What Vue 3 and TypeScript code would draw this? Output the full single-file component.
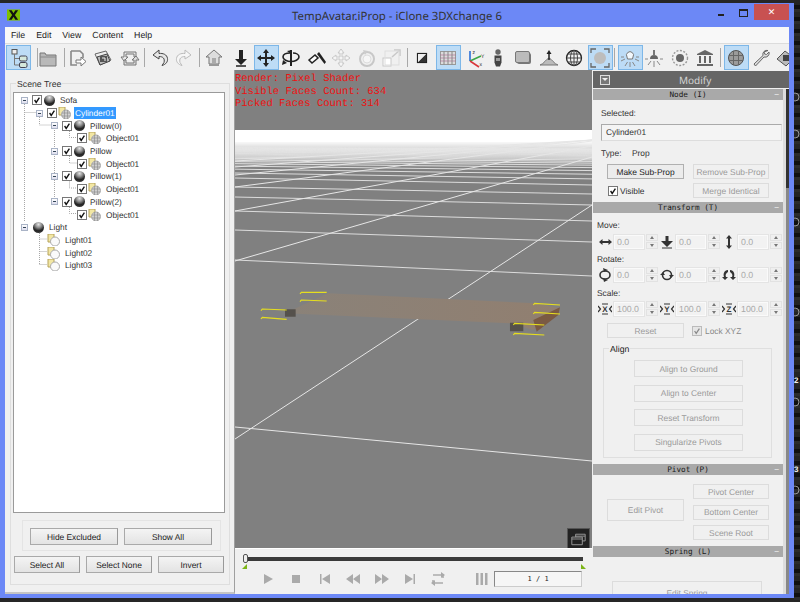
<script setup lang="ts">
interface Tool { c: number; svg?: string; on?: boolean; sep?: boolean; ml?: number }

const I = {
  tree: '<rect x="3" y="1.5" width="5" height="4.5" fill="#eee" stroke="#555"/><path d="M5.5 6v11h5M5.5 10.5h5" stroke="#777" fill="none"/><rect x="10.5" y="8" width="7.5" height="5" rx="1.5" fill="#d5e8dc" stroke="#445"/><rect x="10.5" y="14.5" width="7.5" height="5" rx="1.5" fill="#d5e8dc" stroke="#445"/>',
  folder: '<path d="M2 5h5l1 2h10v11H2z" fill="#b9b9b9" stroke="#777"/><path d="M2 9h16" stroke="#8a8a8a"/>',
  page: '<path d="M4 3h9l3 3v4M4 3v14h6" fill="none" stroke="#888" stroke-width="1.6"/><path d="M9 12h5V9l5 4.5-5 4.5v-3H9z" fill="#fff" stroke="#777"/>',
  layers: '<path d="M2 6l11-3 5 9-11 5z" fill="#eee" stroke="#666"/><path d="M4 9l10-3 3 7-10 4z" fill="#bbb" stroke="#444"/><rect x="7" y="8" width="7" height="6" fill="#555"/><path d="M9 10h3v3" stroke="#eee" fill="none"/>',
  swap: '<path d="M4 4h12v5h-2V6H6v3l2 0-4 4-3-4h3z" fill="#e8e8e8" stroke="#777"/><path d="M16 17H4v-5h2v3h8v-3h-2l4-4 3 4h-3z" fill="#ddd" stroke="#777"/>',
  undo: '<path d="M9 2L3 7l6 4V8.500c4 0 6 2 5 6l-2 3c4-1 6-4 5.500-7C17 6.500 13 5 9 5.500z" fill="#e6e6e6" stroke="#444"/>',
  redo: '<path d="M11 2l6 5-6 4V8.500c-4 0-6 2-5 6l2 3c-4-1-6-4-5.500-7C3 6.500 7 5 11 5.500z" fill="#f6f6f6" stroke="#bbb"/>',
  home: '<path d="M10 2l8 7h-3v7H5V9H2z" fill="#ddd" stroke="#777"/><path d="M5 16h10v2H5z" fill="#999"/><path d="M8 10h4v6H8z" fill="#aaa"/>',
  down: '<path d="M8 2h4v9h4l-6 6-6-6h4z" fill="#222"/><path d="M5 18h10" stroke="#222" stroke-width="1.500"/>',
  move: '<path d="M10 1l3 4h-2v4h4V7l4 3-4 3v-2h-4v4h2l-3 4-3-4h2v-4H5v2l-4-3 4-3v2h4V5H7z" fill="#222"/>',
  rotate: '<path d="M9 2h2v16H9z" fill="#222"/><path d="M9 5C5 5 2 6.500 2 9s4 4.500 8 4.500 8-2 8-4.500-3-4-6-4" fill="none" stroke="#222" stroke-width="1.600"/><path d="M2 12l-1 5 5-2z" fill="#222"/><path d="M6 3l5-1-1 4z" fill="#222"/>',
  pick: '<path d="M2 12l6-5 3 3-6 5z" fill="#fff" stroke="#222" stroke-width="1.500"/><path d="M10 6l2-2 7 10-1.500 2z" fill="#222"/>',
  fmove: '<path d="M10 1l3 4h-2v4h4V7l4 3-4 3v-2h-4v4h2l-3 4-3-4h2v-4H5v2l-4-3 4-3v2h4V5H7z" fill="#f5f5f5" stroke="#c8c8c8"/>',
  frot: '<circle cx="10" cy="11" r="7" fill="none" stroke="#c8c8c8" stroke-width="2"/><circle cx="10" cy="11" r="4" fill="#f6f6f6" stroke="#ddd"/><path d="M6 2l5 1-3 4z" fill="#ccc"/>',
  fscale: '<rect x="1" y="10" width="8" height="8" fill="#fff" stroke="#c8c8c8"/><path d="M10 9l8-7M12 2h6v6" fill="none" stroke="#c8c8c8" stroke-width="1.500"/><rect x="3" y="3" width="14" height="14" fill="none" stroke="#ddd"/>',
  contrast: '<rect x="5.500" y="5.500" width="9" height="9" fill="#fff" stroke="#222" stroke-width="1.200"/><path d="M6 14L14 6v8z" fill="#333"/><path d="M6 6h8L6 14z" fill="#eee"/>',
  grid: '<rect x="2.500" y="3.500" width="15" height="13" fill="#dcdcdc" stroke="#999"/><path d="M2.500 7h15M2.500 10h15M2.500 13h15" stroke="#a58" stroke-opacity=".55"/><path d="M6 3.500v13M10 3.500v13M14 3.500v13" stroke="#888"/>',
  axis: '<path d="M5 13V3" stroke="#2a6fd6" stroke-width="1.600"/><path d="M5 13l11-5" stroke="#3aa648" stroke-width="1.600"/><path d="M5 13l9 6" stroke="#d9373a" stroke-width="1.600"/><text x="7.500" y="5.500" class="ax">z</text><text x="16" y="9.500" class="ax">Y</text><text x="14.500" y="17.500" class="ax">x</text>',
  person: '<circle cx="10" cy="4" r="2.700" fill="#666"/><path d="M6.500 7.500h7v7l-1.500 4H8l-1.500-4z" fill="#444"/><path d="M8 10h4v3H8z" fill="#999"/>',
  rect: '<rect x="4" y="5" width="14" height="11" rx="2" fill="#777"/><rect x="2.500" y="3.500" width="14" height="11" rx="1.500" fill="#bbb" stroke="#777"/>',
  mound: '<path d="M1 17c4-1 6-6 9-7 3 1 5 6 9 7z" fill="#bbb" stroke="#777"/><path d="M10 12V4" stroke="#222" stroke-width="1.500"/><path d="M7.500 6L10 2l2.500 4z" fill="#222"/>',
  globe: '<circle cx="10" cy="10" r="7.500" fill="#f4f4f4" stroke="#222" stroke-width="1.300"/><ellipse cx="10" cy="10" rx="3.500" ry="7.500" fill="none" stroke="#444"/><path d="M2.500 10h15M3.500 6h13M3.500 14h13M10 2.500v15" stroke="#444" fill="none"/>',
  focus: '<circle cx="10" cy="10" r="6" fill="#bdbdbd"/><path d="M1 5V1h5M14 1h5v4M19 15v4h-5M6 19H1v-4" fill="none" stroke="#666" stroke-width="1.300"/>',
  bulb: '<path d="M7 9a3.500 3.500 0 1 1 6 0l-.5 2h-5z" fill="#f2f8fd" stroke="#777"/><path d="M1 13l4-2M19 13l-4-2M5 18l2.500-4M15 18l-2.500-4M10 19v-5M1 9h3M16 9h3" stroke="#888" fill="none"/>',
  bulb2: '<path d="M6 11a4 4 0 0 1 8 0z" fill="#666"/><path d="M9 2h2v6H9z" fill="#777"/><path d="M1 11h3M16 11h3M4 17l3-4M16 17l-3-4M10 19v-6" stroke="#888" fill="none"/>',
  sun: '<circle cx="10" cy="10" r="4" fill="#666"/><g stroke="#999" stroke-width="1.400" stroke-dasharray="2 1.500" fill="none"><circle cx="10" cy="10" r="7.500"/></g>',
  museum: '<path d="M10 2l8 4v1H2V6z" fill="#666"/><path d="M4 8h2v7H4zM9 8h2v7H9zM14 8h2v7h-2z" fill="#666"/><path d="M2 16h16v2H2z" fill="#666"/>',
  ball: '<circle cx="10" cy="10" r="7.500" fill="#9b9b9b" stroke="#555"/><path d="M3 7.500h14M3 12.500h14M7.500 3v14M12.500 3v14" stroke="#666"/>',
  wrench: '<path d="M17 2.500a4 4 0 0 0-5 5L3 16l1.500 2 8.500-9a4 4 0 0 0 5-5l-2.500 2.500-2-.5-.5-2z" fill="#ddd" stroke="#666"/>',
  film: '<path d="M1 11l8-8 9 7-8 8z" fill="#bbb" stroke="#555"/><rect x="7" y="7" width="6" height="6" fill="#444"/>',
}

const raw: Tool[] = [
  { c: 18.5, svg: I.tree, on: true }, { c: 37, sep: true }, { c: 48, svg: I.folder }, { c: 64, sep: true },
  { c: 77, svg: I.page }, { c: 103, svg: I.layers }, { c: 130, svg: I.swap }, { c: 144, sep: true },
  { c: 160, svg: I.undo }, { c: 184, svg: I.redo }, { c: 199, sep: true }, { c: 214, svg: I.home },
  { c: 241, svg: I.down }, { c: 266, svg: I.move, on: true }, { c: 291, svg: I.rotate }, { c: 317, svg: I.pick },
  { c: 341, svg: I.fmove }, { c: 367, svg: I.frot }, { c: 392, svg: I.fscale }, { c: 407, sep: true },
  { c: 422, svg: I.contrast }, { c: 448, svg: I.grid, on: true }, { c: 475, svg: I.axis }, { c: 498, svg: I.person },
  { c: 523, svg: I.rect }, { c: 549, svg: I.mound }, { c: 574, svg: I.globe }, { c: 600, svg: I.focus, on: true },
  { c: 614.5, sep: true }, { c: 630, svg: I.bulb, on: true }, { c: 654, svg: I.bulb2 }, { c: 680, svg: I.sun },
  { c: 705, svg: I.museum }, { c: 720.5, sep: true }, { c: 736, svg: I.ball, on: true }, { c: 761, svg: I.wrench },
  { c: 786, svg: I.film },
]
let right = 5
const tools = raw.map((t) => {
  const w = t.sep ? 1 : 25
  const ml = t.c - w / 2 - right
  right = t.c + w / 2
  return { ...t, ml }
})

const menu = ['File', 'Edit', 'View', 'Content', 'Help']

type Kind = 'sphere' | 'prop' | 'light'
interface Row { label: string; level: number; exp: boolean; check: boolean; kind: Kind; sel?: boolean }
const pillow = (label: string): Row[] => [
  { label, level: 2, exp: true, check: true, kind: 'sphere' },
  { label: 'Object01', level: 3, exp: false, check: true, kind: 'prop' },
]
const rows: Row[] = [
  { label: 'Sofa', level: 0, exp: true, check: true, kind: 'sphere' },
  { label: 'Cylinder01', level: 1, exp: true, check: true, kind: 'prop', sel: true },
  ...pillow('Pillow(0)'), ...pillow('Pillow'), ...pillow('Pillow(1)'), ...pillow('Pillow(2)'),
  { label: 'Light', level: 0, exp: true, check: false, kind: 'sphere' },
  { label: 'Light01', level: 4, exp: false, check: false, kind: 'light' },
  { label: 'Light02', level: 4, exp: false, check: false, kind: 'light' },
  { label: 'Light03', level: 4, exp: false, check: false, kind: 'light' },
]

const hArrow = '<path d="M1 7l3.500-3v2h6V4L14 7l-3.500 3V8h-6v2z" fill="#333"/>'
const dArrow = '<path d="M5.500 1h3v5H13l-6 6-6-6h4.500z" fill="#333"/><path d="M2 13h10" stroke="#333"/>'
const vArrow = '<path d="M7 0l3 3.500H8v7h2L7 14l-3-3.500h2v-7H4z" fill="#333"/>'
const rot1 = '<ellipse cx="7" cy="7" rx="5" ry="4" fill="none" stroke="#333" stroke-width="1.600"/><path d="M5 0l5 2-4 2zM5 10l5 2-4 2z" fill="#333"/>'
const rot2 = '<circle cx="7" cy="7" r="4.500" fill="none" stroke="#333" stroke-width="1.600"/><path d="M0 7l3-3 2 3zM14 7l-3 3-2-3z" fill="#333"/>'
const rot3 = '<path d="M6 2C2 2 1 6 2 9l-2 0 3 3 3-3-2 0c-1-2 0-4 2-5zM8 2c4 0 5 4 4 7l2 0-3 3-3-3 2 0c1-2 0-4-2-5z" fill="#333"/>'
const sc = (l: string) => `<path d="M0 4l2.500 3L0 10M14 4l-2.500 3 2.500 3" fill="none" stroke="#333" stroke-width="1.200"/><path d="M4 2h6M4 12h6" stroke="#333"/><text x="7" y="10" text-anchor="middle" class="sc">${l}</text>`

const spinRows = [
  { label: 'Move:', cls: 'r-move', cells: [{ svg: hArrow, v: '0.0' }, { svg: dArrow, v: '0.0' }, { svg: vArrow, v: '0.0' }] },
  { label: 'Rotate:', cls: 'r-rot', cells: [{ svg: rot1, v: '0.0' }, { svg: rot2, v: '0.0' }, { svg: rot3, v: '0.0' }] },
  { label: 'Scale:', cls: 'r-scale', cells: [{ svg: sc('X'), v: '100.0' }, { svg: sc('Y'), v: '100.0' }, { svg: sc('Z'), v: '100.0' }] },
]
const align = ['Align to Ground', 'Align to Center', 'Reset Transform', 'Singularize Pivots']

const L = [120, 90, 71, 57, 47, 38]
const R = [136, 102, 81, 65, 54, 45]
const hLines: { y1: number; y2: number; o: number }[] = []
for (let n = 0; n < 32; n++) {
  const dl = n < 6 ? L[n] : 1 / (0.0263 + 0.004 * (n - 5))
  const dr = n < 6 ? R[n] : 1 / (0.0222 + 0.0035 * (n - 5))
  hLines.push({ y1: 70 + dl, y2: 70 + dr, o: n < 14 ? 0.9 : 0.75 })
}
const diag = [
  [369, 135], [191, 87], [141, 76], [117, 71], [105, 70], [97, 70], [91, 70],
]
const brackets = [
  [195, 67, 275, 67], [195, 90, 275, 93], [78, 117, 155, 120], [78, 142, 155, 148],
  [895, 100, 975, 105], [895, 127, 975, 132], [835, 160, 928, 165], [835, 190, 928, 195],
]
const marks = [100, 137, 225, 315, 405, 493]
</script>

<template>
  <div class="screen">
    <div class="window">
      <header class="titlebar">
        <svg class="logo" viewBox="0 0 14 12"><rect width="14" height="12" fill="#7fbf00" /><path d="M2 1h3l2 3 2-3h3L8.500 6 12 11H9L7 8l-2 3H2l3.500-5z" fill="#111" /></svg>
        <span class="title">TempAvatar.iProp - iClone 3DXchange 6</span>
        <div class="wctl">
          <span class="wmin"></span>
          <span class="wmax"></span>
          <span class="wclose">✕</span>
        </div>
      </header>
      <nav class="menubar"><span v-for="m in menu" :key="m">{{ m }}</span></nav>
      <div class="toolbar">
        <template v-for="(t, i) in tools" :key="i">
          <span v-if="t.sep" class="tsep" :style="{ marginLeft: t.ml + 'px' }"></span>
          <span v-else class="tbtn" :class="{ on: t.on }" :style="{ marginLeft: t.ml + 'px' }">
            <svg viewBox="0 0 20 20" width="20" height="20" v-html="t.svg"></svg>
          </span>
        </template>
      </div>

      <div class="body">
        <aside class="left">
          <div class="group">
            <span class="legend">Scene Tree</span>
            <div class="tree">
              <svg class="links" width="213" height="200">
                <path d="M10.500 11V129M10.500 19.500H22M25.500 24V32H37M40.500 37V108M55.500 36V44.500H63M55.500 61V70H63M55.500 86.500V95H63M55.500 112V120.500H63M25.500 138V171.500M25.500 146H33M25.500 158.500H33M25.500 171.500H33" fill="none" stroke="#a8a8a8" stroke-dasharray="1 1" />
              </svg>
              <div v-for="(r, i) in rows" :key="i" class="row" :class="'lv' + r.level">
                <span v-if="r.exp" class="exp"></span>
                <span v-if="r.check" class="cb"><svg viewBox="0 0 10 10"><path d="M2 5l2 3 4-6" fill="none" stroke="#111" stroke-width="1.700" /></svg></span>
                <span v-if="r.kind === 'sphere'" class="sphere"></span>
                <svg v-else class="nodeic" viewBox="0 0 13 12">
                  <path d="M1 0h6v8H1z" fill="#f2e7a4" stroke="#b5a25a" />
                  <circle cx="8" cy="7.500" r="4.500" :fill="r.kind === 'light' ? '#fafafa' : '#cfcfcf'" stroke="#aaa" />
                  <path v-if="r.kind === 'prop'" d="M4 6h8M4 9h8M6.500 3v9M9.500 3v9" stroke="#888" stroke-width=".6" />
                </svg>
                <span class="lbl" :class="{ sel: r.sel }">{{ r.label }}</span>
              </div>
            </div>
            <div class="inner">
              <button class="btn w88">Hide Excluded</button>
              <button class="btn w88">Show All</button>
            </div>
            <div class="sel-row">
              <button class="btn w66">Select All</button>
              <button class="btn w66">Select None</button>
              <button class="btn w66">Invert</button>
            </div>
          </div>
        </aside>

        <main class="center">
          <div class="view">
            <svg class="scene" viewBox="0 0 357 478" width="357" height="478">
              <defs>
                <linearGradient id="fade" x1="0" y1="0" x2="0" y2="1">
                  <stop offset="0" stop-color="#fff" stop-opacity=".95" />
                  <stop offset="1" stop-color="#fff" stop-opacity="0" />
                </linearGradient>
                <linearGradient id="top" x1="0" y1="0" x2="1" y2="0">
                  <stop offset="0" stop-color="#8a8279" />
                  <stop offset="1" stop-color="#917f70" />
                </linearGradient>
              </defs>
              <rect x="0" y="60" width="357" height="12" fill="#fff" />
              <rect x="0" y="72" width="357" height="26" fill="url(#fade)" />
              <line v-for="(h, i) in hLines" :key="'h' + i" x1="0" x2="357" :y1="h.y1" :y2="h.y2" stroke="#e6e6e6" :stroke-opacity="h.o" />
              <line v-for="(d, i) in diag" :key="'d' + i" x1="0" x2="357" :y1="d[0]" :y2="d[1]" stroke="#e6e6e6" />
              <line x1="0" y1="357" x2="357" y2="391" stroke="#e6e6e6" />
              <g transform="translate(0 200) scale(.3333)">
                <path d="M280 70L900 100 975 115 895 180 830 160 150 130z" fill="url(#top)" />
                <path d="M895 150L975 112 970 135 905 185z" fill="#7a5a43" />
                <path d="M150 118h32v22h-32zM825 158h40v26h-40z" fill="#55514c" />
                <g fill="none" stroke="#e6de1e" stroke-width="3.500">
                  <path v-for="(b, i) in brackets" :key="'b' + i" :d="`M${b[0]} ${b[1] + 5}L${b[0] + 4} ${b[1]}L${b[2]} ${b[3]}`" />
                </g>
              </g>
            </svg>
            <div class="stats">
              <div>Render: Pixel Shader</div>
              <div>Visible Faces Count: 634</div>
              <div>Picked Faces Count: 314</div>
            </div>
            <span class="winbtn"><svg viewBox="0 0 22 20" width="22" height="20"><path d="M8 5h10v7h-3M4 8h11v8H4zM4 10h11M8 5v3M8 7h10" fill="none" stroke="#999" /></svg></span>
          </div>
          <div class="timeline">
            <div class="track">
              <span class="thumb"></span>
              <span class="tri t1"></span>
              <span class="tri t2"></span>
            </div>
            <div class="transport">
              <svg viewBox="0 0 20 14"><path d="M6 2v10l9-5z" /></svg>
              <svg viewBox="0 0 20 14"><path d="M6 3h8v8H6z" /></svg>
              <svg viewBox="0 0 20 14"><path d="M5 2h1.500v10H5zM15 2v10L7 7z" /></svg>
              <svg viewBox="0 0 20 14"><path d="M10 2v10L3 7zM17 2v10l-7-5z" /></svg>
              <svg viewBox="0 0 20 14"><path d="M10 2v10l7-5zM3 2v10l7-5z" /></svg>
              <svg viewBox="0 0 20 14"><path d="M15 2h-1.500v10H15zM5 2v10l8-5z" /></svg>
              <svg viewBox="0 0 20 14"><path d="M5 3h10v3M15 11H5V8" fill="none" stroke="#aaa" stroke-width="1.500" /><path d="M13 0l4 3-4 3zM7 8l-4 3 4 3z" /></svg>
              <svg class="bars" viewBox="0 0 20 14"><path d="M4 1h2.500v12H4zM8.500 1H11v12H8.500zM13 1h2.500v12H13z" /></svg>
              <span class="counter">1 / 1</span>
            </div>
          </div>
        </main>

        <aside class="right">
          <div class="modify">
            <span class="mbox"><i></i></span>
            <span class="mtitle">Modify</span>
          </div>
          <div class="rollout-wrap">
            <div class="rollouts">
              <div class="rhead"><span>Node (I)</span><b>−</b></div>
              <section class="node">
                <div class="txt sel-l">Selected:</div>
                <div class="field">Cylinder01</div>
                <div class="txt type"><span>Type:</span><span>Prop</span></div>
                <div class="cols">
                  <button class="btn make">Make Sub-Prop</button>
                  <button class="btn off">Remove Sub-Prop</button>
                  <label class="vis"><span class="cb"><svg viewBox="0 0 10 10"><path d="M2 5l2 3 4-6" fill="none" stroke="#111" stroke-width="1.700" /></svg></span>Visible</label>
                  <button class="btn off">Merge Identical</button>
                </div>
              </section>
              <div class="rhead"><span>Transform (T)</span><b>−</b></div>
              <section class="transform">
                <template v-for="s in spinRows" :key="s.label">
                  <div class="txt tlabel" :class="s.cls">{{ s.label }}</div>
                  <div class="spins">
                    <div v-for="(c, i) in s.cells" :key="i" class="cell">
                      <svg viewBox="0 0 14 14" width="14" height="14" v-html="c.svg"></svg>
                      <span class="num">{{ c.v }}</span>
                      <span class="spin"><i class="up"></i><i class="dn"></i></span>
                    </div>
                  </div>
                </template>
                <div class="reset-row">
                  <button class="btn off w77">Reset</button>
                  <label class="lock"><span class="cb dim"><svg viewBox="0 0 10 10"><path d="M2 5l2 3 4-6" fill="none" stroke="#888" stroke-width="1.500" /></svg></span>Lock XYZ</label>
                </div>
                <div class="align">
                  <span class="legend alg">Align</span>
                  <button v-for="a in align" :key="a" class="btn off abtn">{{ a }}</button>
                </div>
              </section>
              <div class="rhead"><span>Pivot (P)</span><b>−</b></div>
              <section class="pivot">
                <button class="btn off epivot">Edit Pivot</button>
                <div class="pcol">
                  <button class="btn off">Pivot Center</button>
                  <button class="btn off">Bottom Center</button>
                  <button class="btn off">Scene Root</button>
                </div>
              </section>
              <div class="rhead"><span>Spring (L)</span><b>−</b></div>
              <section class="spring"><button class="btn off espring">Edit Spring</button></section>
            </div>
            <div class="rscroll"><span></span></div>
          </div>
        </aside>
      </div>
    </div>
    <div class="desktop">
      <svg width="6" height="599" viewBox="0 0 6 599">
        <circle v-for="m in marks" :key="m" cx="1" :cy="m - 3" r="4" fill="none" stroke="#999" />
        <text x="0" y="383" class="dt">2</text>
        <text x="0" y="472" class="dt">3</text>
      </svg>
    </div>
  </div>
</template>

<style>
html, body { margin: 0; padding: 0; background: #1c1c1c; }
</style>

<style scoped>
.screen {
  width: 800px; height: 602px; box-sizing: border-box; padding-top: 3px;
  display: flex; overflow: hidden; background: #262626;
  font-family: "Liberation Sans", Arial, sans-serif; font-size: 8.4px; color: #222;
  text-rendering: geometricPrecision;
}
.window {
  width: 794px; height: 595px; box-sizing: border-box; padding: 0 5px 4px;
  background: #6c88f6; display: flex; flex-direction: column; flex: none;
}
.desktop {
  flex: 1; margin-top: -3px; height: 602px;
  background: repeating-linear-gradient(#242424 0 5px, #101010 5px 9px, #2c2c2c 9px 12px);
}
.dt { font: bold 8px "Liberation Sans", sans-serif; fill: #eee; }

.titlebar { height: 24px; position: relative; display: flex; align-items: center; justify-content: center; flex: none; }
.logo { position: absolute; left: 2px; top: 6px; width: 13px; height: 12px; }
.title { font: 11.4px "Noto Sans", sans-serif; color: #333; margin-top: 2px; }
.wctl { position: absolute; right: 0; top: 1px; height: 16px; display: flex; align-items: flex-start; }
.wmin { width: 6px; height: 2px; background: #222; margin-top: 10px; }
.wmax { width: 7px; height: 5px; border: 1px solid #222; border-top-width: 2px; margin: 5px 6px 0 15px; }
.wclose { width: 35px; height: 16px; background: #c85151; color: #fff; font-size: 9px; line-height: 16px; text-align: center; }

.menubar { height: 16px; flex: none; background: #f8f8f8; display: flex; align-items: center; padding-left: 6px; gap: 11px; font-size: 8.8px; border-bottom: 1px solid #dcdcdc; }

.toolbar { height: 26px; flex: none; box-sizing: border-box; padding-top: 1px; background: #f0f0f0; display: flex; overflow: hidden; }
.tbtn { width: 25px; height: 25px; box-sizing: border-box; flex: none; display: flex; align-items: center; justify-content: center; border: 1px solid transparent; }
.tbtn.on { background: #bddcf6; border-color: #7db7e8; }
.tsep { width: 1px; height: 19px; margin-top: 3px; background: #a8a8a8; flex: none; }
.toolbar :deep(.ax) { font: 5px "Liberation Sans", sans-serif; fill: #222; }

.body { flex: 1; display: flex; min-height: 0; background: #f0f0f0; }

.left { width: 230px; flex: none; box-sizing: border-box; padding: 13px 4px 7px 5px; border-right: 1px solid #a0a0a0; border-bottom: 2px solid #c4c4c4; background: #f0f0f0; }
.group { position: relative; height: 502px; box-sizing: border-box; border: 1px solid #dedede; padding: 8px 4px 0 2px; }
.legend { position: absolute; left: 5px; top: -6px; background: #f0f0f0; padding: 0 1px; font-size: 8.7px; color: #333; line-height: 12px; }
.tree { position: relative; height: 421px; box-sizing: border-box; background: #fff; border: 1px solid #9a9a9a; padding-top: 1px; }
.links { position: absolute; left: 0; top: 0; }
.row { height: 12.7px; display: flex; align-items: center; position: relative; font-size: 8.3px; white-space: nowrap; }
.lv0 { padding-left: 7px; }
.lv1 { padding-left: 22px; }
.lv2 { padding-left: 37px; }
.lv3 { padding-left: 63px; }
.lv4 { padding-left: 33px; }
.exp { width: 7px; height: 7px; box-sizing: border-box; border: 1px solid #a9b3c6; background: linear-gradient(#fff, #dde); margin-right: 4px; position: relative; flex: none; }
.exp::after { content: ""; position: absolute; left: 1px; top: 2px; width: 3px; height: 1px; background: #345; }
.cb { width: 10px; height: 10px; box-sizing: border-box; border: 1px solid #777; background: #fff; display: inline-flex; flex: none; margin-right: 1px; }
.cb svg { width: 100%; height: 100%; }
.cb.dim { border-color: #bbb; background: #e6e6e6; }
.sphere { width: 11px; height: 11px; border-radius: 50%; flex: none; background: radial-gradient(circle at 50% 22%, #e4e4e4 0, #8c8c8c 32%, #222 62%, #4c4c4c 100%); }
.row .sphere { margin-left: 1px; }
.nodeic { width: 13px; height: 12px; flex: none; }
.lbl { margin-left: 4px; padding: 0 1px; line-height: 12px; color: #333; }
.lbl.sel { background: #3399ff; color: #fff; margin-left: 3px; }
.inner { margin: 7px 0 0 9px; width: 199px; height: 31px; box-sizing: border-box; border: 1px solid #e4e4e4; padding: 7px 0 0 7px; display: flex; gap: 6px; }
.sel-row { display: flex; gap: 6px; margin: 5px 0 0 1px; }

.btn { box-sizing: border-box; height: 17px; padding: 0; font: 8.4px "Liberation Sans", Arial, sans-serif; color: #222; background: linear-gradient(#f4f4f4, #e3e3e3); border: 1px solid #a9a9a9; border-right-color: #999; border-radius: 0; white-space: nowrap; overflow: hidden; text-rendering: geometricPrecision; }
.btn.off { background: #f0f0f0; border-color: #dcdcdc; color: #9a9a9a; }
.w88 { width: 88px; }
.w66 { width: 66px; }
.w77 { width: 77px; }

.center { width: 357px; flex: none; display: flex; flex-direction: column; }
.view { position: relative; height: 478px; background: #808080; overflow: hidden; flex: none; }
.scene { display: block; }
.stats { position: absolute; left: 0; top: 3px; font: 10.5px/12.5px "Liberation Mono", monospace; color: #ee1111; white-space: nowrap; }
.winbtn { position: absolute; right: 2px; bottom: 0; width: 23px; height: 20px; background: #222; border: 1px solid #555; border-bottom: 0; box-sizing: border-box; display: flex; align-items: center; justify-content: center; }

.timeline { flex: 1; background: #f0f0f0; border-top: 1px solid #fff; box-sizing: border-box; padding: 8px 9px 0 10px; }
.track { position: relative; height: 4px; background: #3a3a3a; }
.thumb { position: absolute; left: -2px; top: -3px; width: 5px; height: 9px; box-sizing: border-box; background: #eee; border: 1px solid #555; border-radius: 2px; }
.tri { position: absolute; top: 7px; width: 0; height: 0; border-bottom: 5px solid #7cb518; }
.t1 { left: -3px; border-left: 5px solid transparent; }
.t2 { right: -3px; border-right: 5px solid transparent; }
.transport { display: flex; align-items: center; margin-top: 10px; margin-left: 13px; gap: 8.4px; }
.transport svg { width: 20px; height: 14px; fill: #aaa; flex: none; }
.transport .bars { margin-left: 15px; }
.counter { box-sizing: border-box; width: 88px; height: 16px; margin-left: -6px; background: #f6f6f6; border: 1px solid #888; border-bottom-color: #ccc; border-right-color: #ccc; text-align: center; font: 7px/14px "DejaVu Sans Mono", monospace; color: #222; }

.right { flex: 1; display: flex; flex-direction: column; min-width: 0; padding: 1px 0 0 1px; overflow: hidden; }
.modify { height: 17px; flex: none; background: #666; display: flex; align-items: center; position: relative; }
.mbox { position: absolute; left: 7px; top: 4px; width: 10px; height: 10px; box-sizing: border-box; border: 1px solid #ddd; background: #777; display: flex; justify-content: center; padding-top: 2px; }
.mbox i { width: 0; height: 0; border: 3px solid transparent; border-top: 3px solid #eee; }
.mtitle { margin-left: 86px; font: 10px "Noto Sans", sans-serif; color: #d4d4d4; }
.rollout-wrap { flex: 1; display: flex; margin-top: 1px; min-height: 0; overflow: hidden; }
.rollouts { width: 190px; flex: none; }
.rscroll { flex: 1; display: flex; justify-content: flex-end; background: linear-gradient(90deg, #ddd 0 3px, #888 3px); }
.rscroll span { width: 3px; height: 99px; background: #333; }
.rhead { height: 11px; background: #a9a9a9; display: flex; align-items: center; justify-content: center; position: relative; font: 7.7px/11px "DejaVu Sans Mono", monospace; color: #1a1a1a; }
.rhead b { position: absolute; right: 4px; top: 0; color: #eee; font-weight: normal; font-size: 8px; }
.txt { font-size: 8.4px; line-height: 12px; color: #333; }
.node { height: 102px; box-sizing: border-box; padding: 7px 0 0 8px; }
.field { box-sizing: border-box; width: 181px; height: 17px; margin-top: 5px; background: #f4f4f4; border: 1px solid #b5b5b5; border-color: #aaa #ddd #ddd #aaa; font-size: 8.4px; line-height: 15px; padding-left: 4px; color: #333; }
.type { margin-top: 6px; display: flex; gap: 10.5px; }
.cols { margin: 5px 0 0 6px; display: grid; grid-template-columns: 77px 76px; column-gap: 9px; row-gap: 4px; }
.cols .btn { height: 15px; }
.make { border-color: #b0b0b0; background: #ececec; }
.vis { display: flex; align-items: center; font-size: 8.4px; color: #333; margin-left: 1px; gap: 1px; }
.transform { height: 251px; box-sizing: border-box; padding-top: 6px; }
.tlabel { padding-left: 4px; }
.r-rot { margin-top: 4px; }
.r-scale { margin-top: 5px; }
.spins { display: flex; gap: 2px; padding-left: 5px; margin-top: 3px; }
.r-rot + .spins { margin-top: 2px; }
.r-scale + .spins { margin-top: 2px; }
.cell { display: flex; align-items: center; width: 60px; height: 15px; }
.cell svg { flex: none; width: 14px; height: 14px; margin-right: 1px; }
.cell :deep(.sc) { font: bold 8px "Liberation Sans", sans-serif; fill: #333; }
.num { box-sizing: border-box; width: 32px; height: 16px; border: 1px solid #e4e4e4; background: #f2f2f2; color: #a8a8a8; font-size: 8.8px; line-height: 14px; padding-left: 3px; outline: 1px solid #fafafa; outline-offset: -2px; }
.spin { width: 12px; margin-left: 1px; display: flex; flex-direction: column; gap: 1px; flex: none; }
.spin i { height: 7px; box-sizing: border-box; background: #efefef; border: 1px solid #e2e2e2; display: flex; justify-content: center; align-items: center; }
.spin i::after { content: ""; border-left: 2.5px solid transparent; border-right: 2.5px solid transparent; }
.spin .up::after { border-bottom: 3px solid #777; }
.spin .dn::after { border-top: 3px solid #777; }
.reset-row { display: flex; align-items: center; margin: 7px 0 0 14px; gap: 8px; }
.reset-row .btn { height: 15px; }
.lock { display: flex; align-items: center; gap: 2px; color: #888; font-size: 8.4px; }
.align { position: relative; box-sizing: border-box; margin: 10px 0 0 10px; width: 169px; height: 110px; border: 1px solid #dfdfdf; padding: 11px 0 0 30px; display: flex; flex-direction: column; gap: 7.6px; }
.alg { color: #222; }
.abtn { width: 109px; flex: none; }
.pivot { height: 71px; box-sizing: border-box; position: relative; padding: 9px 0 0 14px; display: flex; gap: 9px; align-items: flex-start; }
.epivot { width: 77px; height: 22px; margin-top: 15px; }
.pcol { display: flex; flex-direction: column; gap: 5.500px; width: 76px; }
.pcol .btn { height: 15px; width: 76px; }
.spring { height: 40px; padding: 24px 0 0 19px; box-sizing: border-box; }
.espring { width: 150px; height: 24px; }
</style>
